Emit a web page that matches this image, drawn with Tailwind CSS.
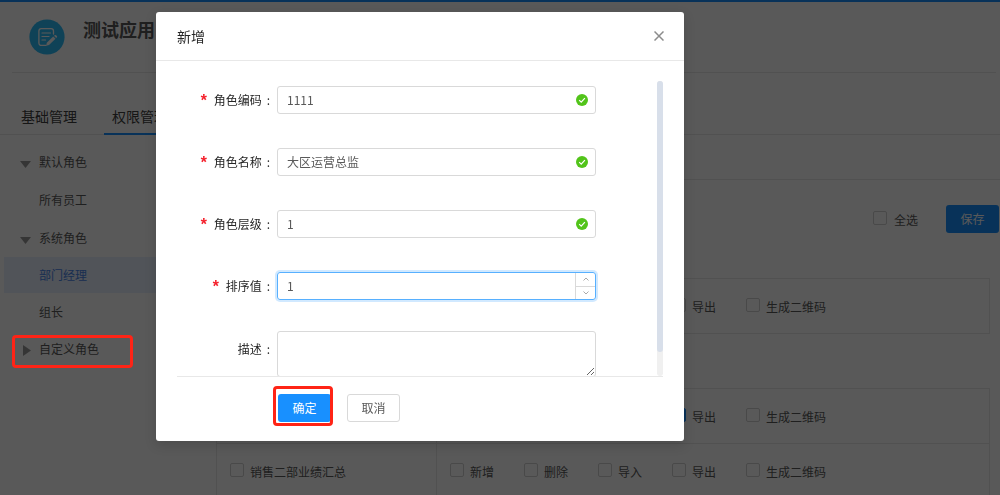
<!DOCTYPE html>
<html lang="zh-CN">
<head>
    <meta charset="UTF-8">
    <meta name="viewport" content="width=device-width, initial-scale=1.0">
    <title>测试应用</title>
    <script src="https://cdn.jsdelivr.net/npm/@tailwindcss/browser@4"></script>
</head>
<body class="h-screen overflow-hidden bg-white font-['Noto_Sans_CJK_SC',sans-serif] text-xs text-[#595959]">
    <header class="border-t-2 border-[#1890ff]">
        <div class="ml-3 mr-1 flex h-[71px] items-start gap-[18px] border-b border-[#e8e8e8] pl-[17px] pt-[17px]">
            <svg class="size-9" viewBox="0 0 36 36" fill="none">
                <circle cx="18" cy="18" r="17.6" fill="#2dbdfa"/>
                <path d="M24.5 15V12a2.4 2.4 0 0 0-2.4-2.4h-9.8A2.4 2.4 0 0 0 9.900 12v12a2.400 2.400 0 0 0 2.400 2.400h4.500" stroke="#fff" stroke-width="1.300" stroke-linecap="round"/>
                <path d="M13 14h8.500M13 17.500h7M13 21h3.500" stroke="#fff" stroke-width="1.200" stroke-linecap="round"/>
                <path d="M24.200 17.600l2.300 2.200-6.500 6.200-2.900.8.700-3zM25 16.800l.7-.6c.4-.4.9-.4 1.300 0l.9.900c.4.400.4.900 0 1.200l-.7.700z" fill="#fff"/>
            </svg>
            <h1 class="text-lg font-bold leading-5">测试应用</h1>
        </div>
        <nav class="mt-7 flex h-[34px] gap-[18px] border-b border-[#e8e8e8] pl-3 text-sm leading-[30px] text-[#404040]">
            <a href="#" class="px-[9px]">基础管理</a>
            <a href="#" class="h-[34px] border-b-2 border-[#1890ff] px-2">权限管理</a>
        </nav>
    </header>

    <div class="flex">
        <aside class="w-[216px] shrink-0 pl-1 pt-2">
            <ul class="leading-[38px]">
                <li class="flex h-[38px] items-center gap-2 pl-4">
                    <svg class="mt-1 h-[7px] w-[11px]" viewBox="0 0 11 7"><path d="M0 0h11L5.500 7z" fill="#999"/></svg>
                    默认角色
                </li>
                <li class="h-[38px] pl-[35px]">所有员工</li>
                <li class="flex h-[38px] items-center gap-2 pl-4">
                    <svg class="mt-1 h-[7px] w-[11px]" viewBox="0 0 11 7"><path d="M0 0h11L5.500 7z" fill="#999"/></svg>
                    系统角色
                </li>
                <li class="h-9 bg-[#e8f0ff] pl-[35px] leading-9 text-[#4a86e8]">部门经理</li>
                <li class="h-[37px] pl-[35px]">组长</li>
                <li class="relative flex h-[37px] items-center gap-2 pl-[19px]">
                    <svg class="mt-1 h-[11px] w-2" viewBox="0 0 8 11"><path d="M0 0l8 5.500L0 11z" fill="#999"/></svg>
                    自定义角色
                    <span class="absolute left-2 top-[5px] z-20 h-[33px] w-[121px] rounded-sm border-3 border-[#ff2416]"></span>
                </li>
            </ul>
        </aside>

        <main class="min-w-0 flex-1">
            <div class="h-[45px] border-b border-[#e8e8e8]"></div>
            <div class="flex h-[98px] items-start justify-end pr-px pt-[25px]">
                <label class="mr-7 flex h-7 items-center gap-[7px]">
                    <input type="checkbox" class="mb-[2px] size-3.5 appearance-none rounded-xs border border-[#d0d0d0]">
                    <span class="pt-[2px]">全选</span>
                </label>
                <button class="h-7 w-[53px] rounded-[3px] bg-[#1890ff] text-white">保存</button>
            </div>
            <table class="w-[calc(100%-10px)] table-fixed border-collapse">
                <tbody data-rows="明细:"></tbody>
            </table>
            <table class="mt-[54px] w-[calc(100%-10px)] table-fixed border-collapse">
                <tbody data-rows="汇总:导出|销售二部业绩汇总:"></tbody>
            </table>
        </main>
    </div>

    <div class="fixed inset-0 z-10 bg-black/65"></div>

    <div role="dialog" aria-labelledby="dialogTitle" class="absolute left-[156px] top-3 z-20 w-[calc(100%-472px)] rounded-[3px] bg-white shadow-[0_4px_12px_rgba(0,0,0,0.15)]">
        <div class="flex h-[49px] items-center justify-between border-b border-[#e8e8e8] pl-[21px] pr-5">
            <h2 id="dialogTitle" class="text-sm text-[#262626]">新增</h2>
            <button aria-label="关闭">
                <svg class="size-[10px]" viewBox="0 0 10 10"><path d="M.500.500l9 9m0-9l-9 9" stroke="#8c8c8c" stroke-width="1.500"/></svg>
            </button>
        </div>

        <form class="pb-[19px]">
            <div class="relative mx-[21px] mt-5 h-[296px] overflow-hidden border-b border-[#e8e8e8] pr-[67px] pt-[5px] text-[#262626]">
                <div class="flex flex-col gap-[34px]">
                    <div class="flex h-7 items-center">
                        <label for="code" class="flex w-[100px] shrink-0 items-center justify-end pr-[7px]"><span class="mr-[5px] pt-1 font-['Liberation_Mono',monospace] text-base font-bold leading-none text-[#f5222d]">*</span>角色编码<span class="ml-[5px]">:</span></label>
                        <div class="relative flex-1">
                            <input id="code" value="1111" class="block h-7 w-full rounded-[3px] border border-[#d9d9d9] px-[9px] pb-[2px] text-[#595959]">
                            <svg class="absolute right-2 top-2 size-3" viewBox="0 0 12 12"><circle cx="6" cy="6" r="6" fill="#52c41a"/><path d="M3.200 6.100l2 2 3.700-4" fill="none" stroke="#fff" stroke-width="1.200"/></svg>
                        </div>
                    </div>
                    <div class="flex h-7 items-center">
                        <label for="name" class="flex w-[100px] shrink-0 items-center justify-end pr-[7px]"><span class="mr-[5px] pt-1 font-['Liberation_Mono',monospace] text-base font-bold leading-none text-[#f5222d]">*</span>角色名称<span class="ml-[5px]">:</span></label>
                        <div class="relative flex-1">
                            <input id="name" value="大区运营总监" class="block h-7 w-full rounded-[3px] border border-[#d9d9d9] px-[9px] pb-[2px] text-[#595959]">
                            <svg class="absolute right-2 top-2 size-3" viewBox="0 0 12 12"><circle cx="6" cy="6" r="6" fill="#52c41a"/><path d="M3.200 6.100l2 2 3.700-4" fill="none" stroke="#fff" stroke-width="1.200"/></svg>
                        </div>
                    </div>
                    <div class="flex h-7 items-center">
                        <label for="level" class="flex w-[100px] shrink-0 items-center justify-end pr-[7px]"><span class="mr-[5px] pt-1 font-['Liberation_Mono',monospace] text-base font-bold leading-none text-[#f5222d]">*</span>角色层级<span class="ml-[5px]">:</span></label>
                        <div class="relative flex-1">
                            <input id="level" value="1" class="block h-7 w-full rounded-[3px] border border-[#d9d9d9] px-[9px] pb-[2px] text-[#595959]">
                            <svg class="absolute right-2 top-2 size-3" viewBox="0 0 12 12"><circle cx="6" cy="6" r="6" fill="#52c41a"/><path d="M3.200 6.100l2 2 3.700-4" fill="none" stroke="#fff" stroke-width="1.200"/></svg>
                        </div>
                    </div>
                    <div class="flex h-7 items-center">
                        <label for="sort" class="flex w-[100px] shrink-0 items-center justify-end pr-[7px]"><span class="mr-[5px] pt-1 font-['Liberation_Mono',monospace] text-base font-bold leading-none text-[#f5222d]">*</span>排序值<span class="ml-[5px]">:</span></label>
                        <div class="flex h-7 flex-1 rounded-[3px] border border-[#57b0ff] shadow-[0_0_0_2px_rgba(24,144,255,0.2)]">
                            <input id="sort" type="number" value="1" class="min-w-0 flex-1 px-[9px] text-[#595959] outline-none [appearance:textfield] [&::-webkit-inner-spin-button]:appearance-none">
                            <div class="flex w-5 flex-col border-l border-[#d9d9d9]">
                                <button type="button" aria-label="增加" class="flex flex-1 items-center justify-center border-b border-[#d9d9d9]">
                                    <svg class="h-1 w-[6px]" viewBox="0 0 6 4"><path d="M.500 3.500L3 1l2.500 2.500" fill="none" stroke="#aaa"/></svg>
                                </button>
                                <button type="button" aria-label="减少" class="flex flex-1 items-center justify-center">
                                    <svg class="h-1 w-[6px]" viewBox="0 0 6 4"><path d="M.500.500L3 3 5.500.500" fill="none" stroke="#aaa"/></svg>
                                </button>
                            </div>
                        </div>
                    </div>
                </div>
                <div class="mt-[31px] flex items-start">
                    <label for="desc" class="flex h-9 w-[100px] shrink-0 items-center justify-end pr-[7px]">描述<span class="ml-[5px]">:</span></label>
                    <textarea id="desc" class="block h-[46px] flex-1 resize-y rounded-[3px] border border-[#d9d9d9] px-[9px]"></textarea>
                </div>
                <div class="absolute inset-y-0 right-0 w-[6px] rounded-[3px] bg-[#f0f0f0]">
                    <div class="h-[92%] rounded-[3px] bg-[#d8dfea]"></div>
                </div>
            </div>

            <div class="ml-[122px] mt-[17px] flex gap-4">
                <div class="relative">
                    <button type="button" class="block h-7 w-[53px] rounded-[3px] bg-[#1890ff] text-white">确定</button>
                    <span class="absolute -left-[5px] -top-2 h-10 w-[60px] rounded-sm border-3 border-[#ff2416]"></span>
                </div>
                <button type="button" class="h-7 w-[53px] rounded-[3px] border border-[#d9d9d9] text-[#595959]">取消</button>
            </div>
        </form>
    </div>

    <script>
        const actions = ['新增', '删除', '导入', '导出', '生成二维码'];

        function checkbox(text, checked) {
            return `<label class="flex items-center gap-[6px]">
                        <input type="checkbox" ${checked ? 'checked' : ''} class="mb-[2px] size-3.5 shrink-0 appearance-none rounded-xs border border-[#d0d0d0] checked:border-[#1890ff] checked:bg-[#1890ff]">
                        <span class="whitespace-nowrap pt-[2px]">${text}</span>
                    </label>`;
        }

        document.querySelectorAll('[data-rows]').forEach(body => {
            body.innerHTML = body.dataset.rows.split('|').map(row => {
                const [name, checked] = row.split(':');
                return `<tr class="h-[55px]">
                            <td class="w-[220px] border border-[#e8e8e8] pl-[13px]">${checkbox(name, false)}</td>
                            <td class="border border-[#e8e8e8] pl-[13px]">
                                <div class="grid grid-cols-[repeat(4,74px)_1fr]">${actions.map(a => checkbox(a, a === checked)).join('')}</div>
                            </td>
                        </tr>`;
            }).join('');
        });
    </script>
</body>
</html>
